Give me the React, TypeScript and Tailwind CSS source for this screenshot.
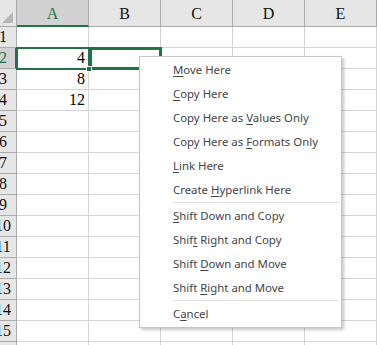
import React from "react";

const cols = ["A", "B", "C", "D", "E"];
const rows = Array.from({ length: 16 }, (_, i) => i + 1);
const values: Record<number, string> = { 2: "4", 3: "8", 4: "12" };

type Item = { pre: string; key: string; post: string } | "sep";
const items: Item[] = [
  { pre: "", key: "M", post: "ove Here" },
  { pre: "", key: "C", post: "opy Here" },
  { pre: "Copy Here as ", key: "V", post: "alues Only" },
  { pre: "Copy Here as ", key: "F", post: "ormats Only" },
  { pre: "", key: "L", post: "ink Here" },
  { pre: "Create ", key: "H", post: "yperlink Here" },
  "sep",
  { pre: "", key: "S", post: "hift Down and Copy" },
  { pre: "Shif", key: "t", post: " Right and Copy" },
  { pre: "Shift ", key: "D", post: "own and Move" },
  { pre: "Shift ", key: "R", post: "ight and Move" },
  "sep",
  { pre: "C", key: "a", post: "ncel" },
];

export default function App() {
  return (
    <div className="relative w-[377px] h-[345px] overflow-hidden bg-white" style={{ fontFamily: '"Liberation Serif", serif' }}>
      {/* header */}
      <div className="flex h-[27px]">
        <div className="relative w-[17px] shrink-0 bg-[#e6e6e6] border-r border-b border-[#ababab]">
          <svg className="absolute right-[3px] bottom-[3px]" width="11" height="11" viewBox="0 0 11 11">
            <polygon points="11,0 11,11 0,11" fill="#b6b6b6" />
          </svg>
        </div>
        {cols.map((c) => (
          <div
            key={c}
            className={
              c === "A"
                ? "w-[72px] shrink-0 flex items-center justify-center bg-[#d2d2d2] border-r border-[#ababab] border-b-2 border-b-[#217346] text-[#217346] text-[16px] pt-[2px]"
                : "w-[72px] shrink-0 flex items-center justify-center bg-[#e6e6e6] border-r border-[#ababab] border-b border-b-[#ababab] text-[#111] text-[16px] pt-[1px]"
            }
          >
            {c}
          </div>
        ))}
      </div>
      {rows.map((r) => (
        <div key={r} className="flex h-[21px]">
          <div
            className={
              r === 2
                ? "w-[17px] shrink-0 overflow-hidden bg-[#d2d2d2] border-r-2 border-r-[#217346] border-b border-b-[#ababab] flex items-center"
                : "w-[17px] shrink-0 overflow-hidden bg-[#e6e6e6] border-r border-r-[#ababab] border-b border-b-[#ababab] flex items-center"
            }
          >
            <span className={r === 2 ? "w-[20px] -ml-[7px] shrink-0 text-center text-[16px] text-[#217346]" : "w-[20px] -ml-[7px] shrink-0 text-center text-[16px] text-[#111]"}>
              {r}
            </span>
          </div>
          {cols.map((c) => (
            <div
              key={c}
              className="w-[72px] shrink-0 border-r border-b border-[#d4d4d4] flex items-center justify-end pr-[3px] text-[16px] text-black"
            >
              {c === "A" ? values[r] ?? "" : ""}
            </div>
          ))}
        </div>
      ))}

      {/* selection outlines */}
      <div className="absolute left-[16px] top-[47px] w-[74px] h-[23px] border-2 border-[#217346]" />
      <div className="absolute left-[89px] top-[47px] w-[73px] h-[23px] border-[3px] border-[#217346]" />
      <div className="absolute left-[86px] top-[66px] w-[6px] h-[6px] bg-[#217346] border border-white" />

      {/* context menu */}
      <div
        className="absolute left-[139px] top-[56px] w-[203px] h-[272px] bg-white border border-[#c6c6c6] shadow-[2px_2px_3px_rgba(0,0,0,0.22)] pt-[1px] text-[#444444] text-[11.4px]"
        style={{ fontFamily: '"Noto Sans", "Open Sans", sans-serif' }}
      >
        {items.map((it, i) =>
          it === "sep" ? (
            <div key={i} className="h-[2px] pl-[33px] pr-[2px]">
              <div className="h-px bg-[#e1e1e1]" />
            </div>
          ) : (
            <div key={i} className="h-[24px] flex items-center pl-[33px]">
              <span className="whitespace-pre">
                {it.pre}
                <span className="underline underline-offset-2">{it.key}</span>
                {it.post}
              </span>
            </div>
          )
        )}
      </div>
    </div>
  );
}
